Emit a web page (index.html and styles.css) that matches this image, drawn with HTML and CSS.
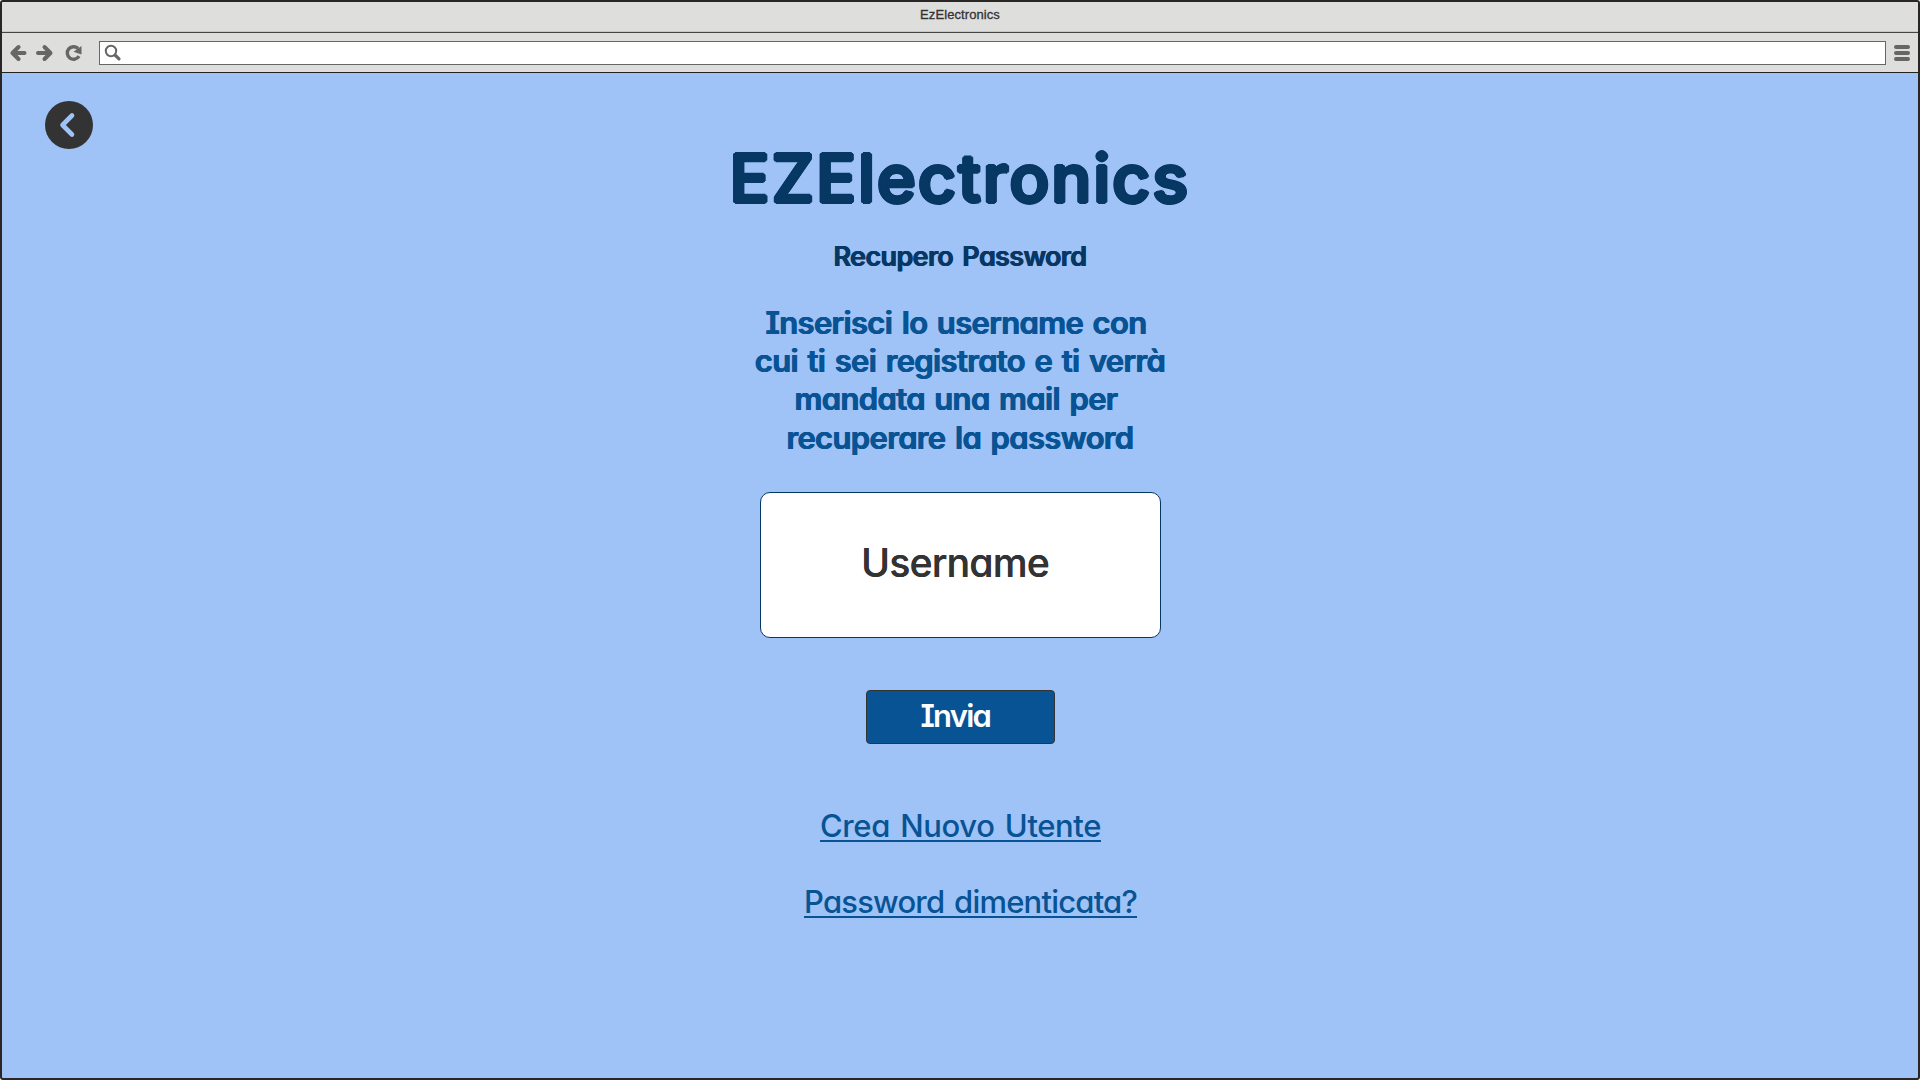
FILE: index.html
```html
<!DOCTYPE html>
<html lang="it">
<head>
<meta charset="utf-8">
<title>EzElectronics</title>
<link rel="stylesheet" href="styles.css">
</head>
<body>
<div class="window">
  <header class="titlebar">EzElectronics</header>
  <nav class="toolbar">
    <svg class="nav-icons" width="76" height="20" viewBox="0 0 76 20" fill="none" stroke="#666" stroke-width="4" stroke-linecap="round" stroke-linejoin="round">
      <path d="M8.500 4 2.500 10l6 6M3 10h11.500"/>
      <path d="M34.500 4l6 6-6 6M40 10H28"/>
      <path d="M68 5.500A6.300 6.300 0 1 0 69 13.200" stroke-width="3.400" stroke-linecap="butt"/>
      <path d="M71.500 3v8.500l-8-2.800z" fill="#666" stroke="none"/>
    </svg>
    <div class="address">
      <svg width="18" height="18" viewBox="0 0 18 18" fill="none" stroke="#666" stroke-linecap="round">
        <circle cx="7" cy="7" r="5.200" stroke-width="2"/>
        <path d="M11.500 11.500l3.500 3.300" stroke-width="3.200"/>
      </svg>
    </div>
    <svg class="menu" width="16" height="16" viewBox="0 0 16 16" fill="#666">
      <rect width="16" height="4" rx="2"/><rect y="6" width="16" height="4" rx="2"/><rect y="12" width="16" height="4" rx="2"/>
    </svg>
  </nav>
  <main class="page">
    <a class="back">
      <svg width="48" height="48" viewBox="0 0 48 48"><circle cx="24" cy="24" r="24" fill="#333"/><path d="M27 14.500 17.500 24l9.500 9.500" fill="none" stroke="#9fc3f7" stroke-width="4.600" stroke-linecap="round" stroke-linejoin="round"/></svg>
    </a>
    <h1 class="brand">EZElectronics</h1>
    <h2 class="subtitle">Recupero Password</h2>
    <p class="hint"><span class="short">Inserisci lo username con</span><br><span>cui ti sei registrato e ti verrà</span><br><span class="short">mandata una mail per</span><br><span>recuperare la password</span></p>
    <div class="field">Username</div>
    <div class="submit">Invia</div>
    <a class="link create">Crea Nuovo Utente</a>
    <a class="link forgot">Password dimenticata?</a>
  </main>
</div>
</body>
</html>
```
FILE: styles.css
```css
* { box-sizing: border-box; }
body { margin: 0; background: #fff; font-family: Inter, "Noto Sans", sans-serif; font-feature-settings: "cv11", "cv08"; }
.window { width: 1920px; height: 1080px; display: flex; flex-direction: column; border: 2px solid #2a2626; border-radius: 3px; overflow: hidden; background: #9fc3f7; }
.titlebar { flex: none; height: 31px; padding-top: 5px; background: #dededc; border-bottom: 1px solid #444; box-shadow: inset 0 -1px #c8c8c6; text-align: center; font: 13px/15px "Liberation Sans", Arial, sans-serif; letter-spacing: 0.080px; color: #333; -webkit-text-stroke: 0.300px #333; }
.toolbar { flex: none; height: 40px; display: flex; align-items: center; padding: 0 8px; background: #dededc; border-bottom: 1px solid #222; }
.nav-icons { margin-right: 13px; }
.address { flex: 1; height: 24px; display: flex; align-items: center; padding-left: 4px; margin-right: 8px; background: #fff; border: 1px solid #666; }
.page { flex: 1; position: relative; display: flex; flex-direction: column; align-items: center; }
.back { position: absolute; left: 43px; top: 28px; height: 48px; }
.back svg { display: block; }
.brand { margin: 62px 0 0; font-size: 66px; line-height: 86px; font-weight: 500; letter-spacing: 2.200px; color: #073763; text-shadow: 2px 0, -2px 0, 0 2px, 0 -2px, 1.400px 1.400px, -1.400px 1.400px, 1.400px -1.400px, -1.400px -1.400px; }
.subtitle { margin: 19px 0 0; font-size: 27px; line-height: 34px; font-weight: 600; letter-spacing: -0.650px; word-spacing: 3px; color: #073763; text-shadow: 0.500px 0, -0.500px 0; }
.hint { margin: 29.500px 0 0; font-size: 31px; line-height: 38.400px; font-weight: 600; letter-spacing: -0.650px; word-spacing: 2.300px; color: #085394; text-align: center; text-shadow: 0.500px 0, -0.500px 0; }
.hint .short { padding-right: 8px; }
.field { width: 401px; height: 146px; margin: 35px 0 0 1px; padding: 46px 0 0 100px; background: #fff; border: 1px solid #073763; border-radius: 10px; font-size: 39px; line-height: 48px; font-weight: 550; letter-spacing: -0.700px; color: #333; text-shadow: 0.300px 0; }
.submit { width: 189px; height: 54px; margin-top: 52px; padding: 6px 0 0 54px; background: #085394; border: 1px solid #333; border-radius: 4px; font-size: 31px; line-height: 38px; font-weight: 600; letter-spacing: -1.800px; color: #fff; }
.link { font-size: 31px; line-height: 38px; font-weight: 550; letter-spacing: -0.800px; word-spacing: 2.300px; color: #085394; text-decoration: underline 2px; text-underline-offset: 3px; text-decoration-skip-ink: none; }
.create { margin: 63px 0 0 1px; letter-spacing: -0.400px; word-spacing: 2.500px; }
.forgot { margin: 38px 0 0 21px; }
```
